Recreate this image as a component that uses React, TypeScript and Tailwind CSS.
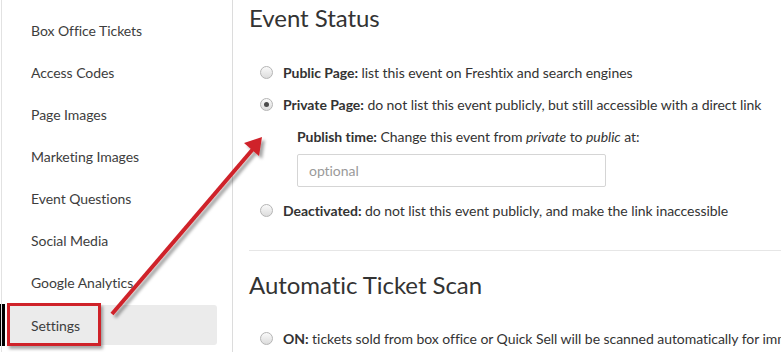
import React from 'react';

const sideItems = [
  'Box Office Tickets',
  'Access Codes',
  'Page Images',
  'Marketing Images',
  'Event Questions',
  'Social Media',
  'Google Analytics',
];

const Radio: React.FC<{ checked?: boolean }> = ({ checked }) => (
  <span className="w-[13px] h-[13px] rounded-full border border-[#b5b5b5] bg-gradient-to-b from-[#fafafa] to-[#dcdcdc] flex items-center justify-center shrink-0">
    {checked && <span className="w-[5px] h-[5px] rounded-full bg-[#4a4a4a]" />}
  </span>
);

const RadioRow: React.FC<{ checked?: boolean; label: string; children: React.ReactNode }> = ({ checked, label, children }) => (
  <div className="h-[32px] flex items-center pl-[11px]">
    <Radio checked={checked} />
    <span className="ml-[10px] whitespace-nowrap">
      <strong className="font-bold">{label}</strong> {children}
    </span>
  </div>
);

export default function App() {
  return (
    <div
      className="relative w-[781px] h-[352px] overflow-hidden bg-white text-[#333] text-[14px] [font-variant-ligatures:none] tracking-[-0.05px]"
      style={{ fontFamily: 'Lato, "Open Sans", sans-serif' }}
    >
      <div className="flex h-full">
        <aside className="w-[233px] shrink-0 h-full border-r border-[#dcdcdc] pt-[10px] text-[#3d3d3d] relative">
          <div className="absolute left-[1px] top-0 bottom-0 w-px bg-[#e2e2e2]" />
          {sideItems.map((item) => (
            <div key={item} className="h-[40px] mb-[2px] flex items-center pl-[31px]">
              {item}
            </div>
          ))}
          <div className="h-[42px] flex items-stretch">
            <div className="w-[5px] bg-black" />
            <div className="w-[210px] ml-[2px] h-[40px] mt-[1px] rounded-[3px] bg-[#ebebeb] flex items-center pl-[24px]">
              Settings
            </div>
          </div>
        </aside>

        <main className="flex-1 pl-[16px]">
          <h2 className="h-[36px] leading-[36px] text-[24px] font-normal text-[#333]">Event Status</h2>
          <div className="mt-[20px]">
            <RadioRow label="Public Page:">list this event on Freshtix and search engines</RadioRow>
            <RadioRow checked label="Private Page:">
              do not list this event publicly, but still accessible with a direct link
            </RadioRow>
            <div className="pl-[48px]">
              <div className="h-[32px] flex items-center whitespace-nowrap">
                <strong className="font-bold">Publish time:</strong>&nbsp;Change this event from&nbsp;<em>private</em>&nbsp;to&nbsp;<em>public</em>&nbsp;at:
              </div>
              <div className="mt-[2px] w-[309px] h-[33px] border border-[#d5d5d5] rounded-[2px] flex items-center px-[11px] text-[#9a9a9a]">
                optional
              </div>
            </div>
            <div className="mt-[7px]">
              <RadioRow label="Deactivated:">do not list this event publicly, and make the link inaccessible</RadioRow>
            </div>
          </div>
          <div className="mt-[24px] border-t border-[#e6e6e6]" />
          <h2 className="mt-[16px] h-[36px] leading-[36px] text-[24px] font-normal text-[#333]">Automatic Ticket Scan</h2>
          <div className="mt-[19px]">
            <RadioRow label="ON:">tickets sold from box office or Quick Sell will be scanned automatically for immediate entry</RadioRow>
          </div>
        </main>
      </div>

      {/* annotation overlay */}
      <div className="absolute left-[7px] top-[303px] w-[94px] h-[43px] border-[3px] border-[#cf2229] shadow-[2px_3px_3px_rgba(0,0,0,0.35)]" />
      <svg className="absolute left-0 top-0 pointer-events-none" width="781" height="352">
        <defs>
          <filter id="sh" x="-20%" y="-20%" width="140%" height="140%">
            <feDropShadow dx="3" dy="3" stdDeviation="1.5" floodColor="#000" floodOpacity="0.35" />
          </filter>
        </defs>
        <g filter="url(#sh)">
          <line x1="112" y1="314" x2="253" y2="149" stroke="#cf2229" strokeWidth="4" />
          <polygon points="262,137 244,143 259,156" fill="#cf2229" />
        </g>
      </svg>
    </div>
  );
}
